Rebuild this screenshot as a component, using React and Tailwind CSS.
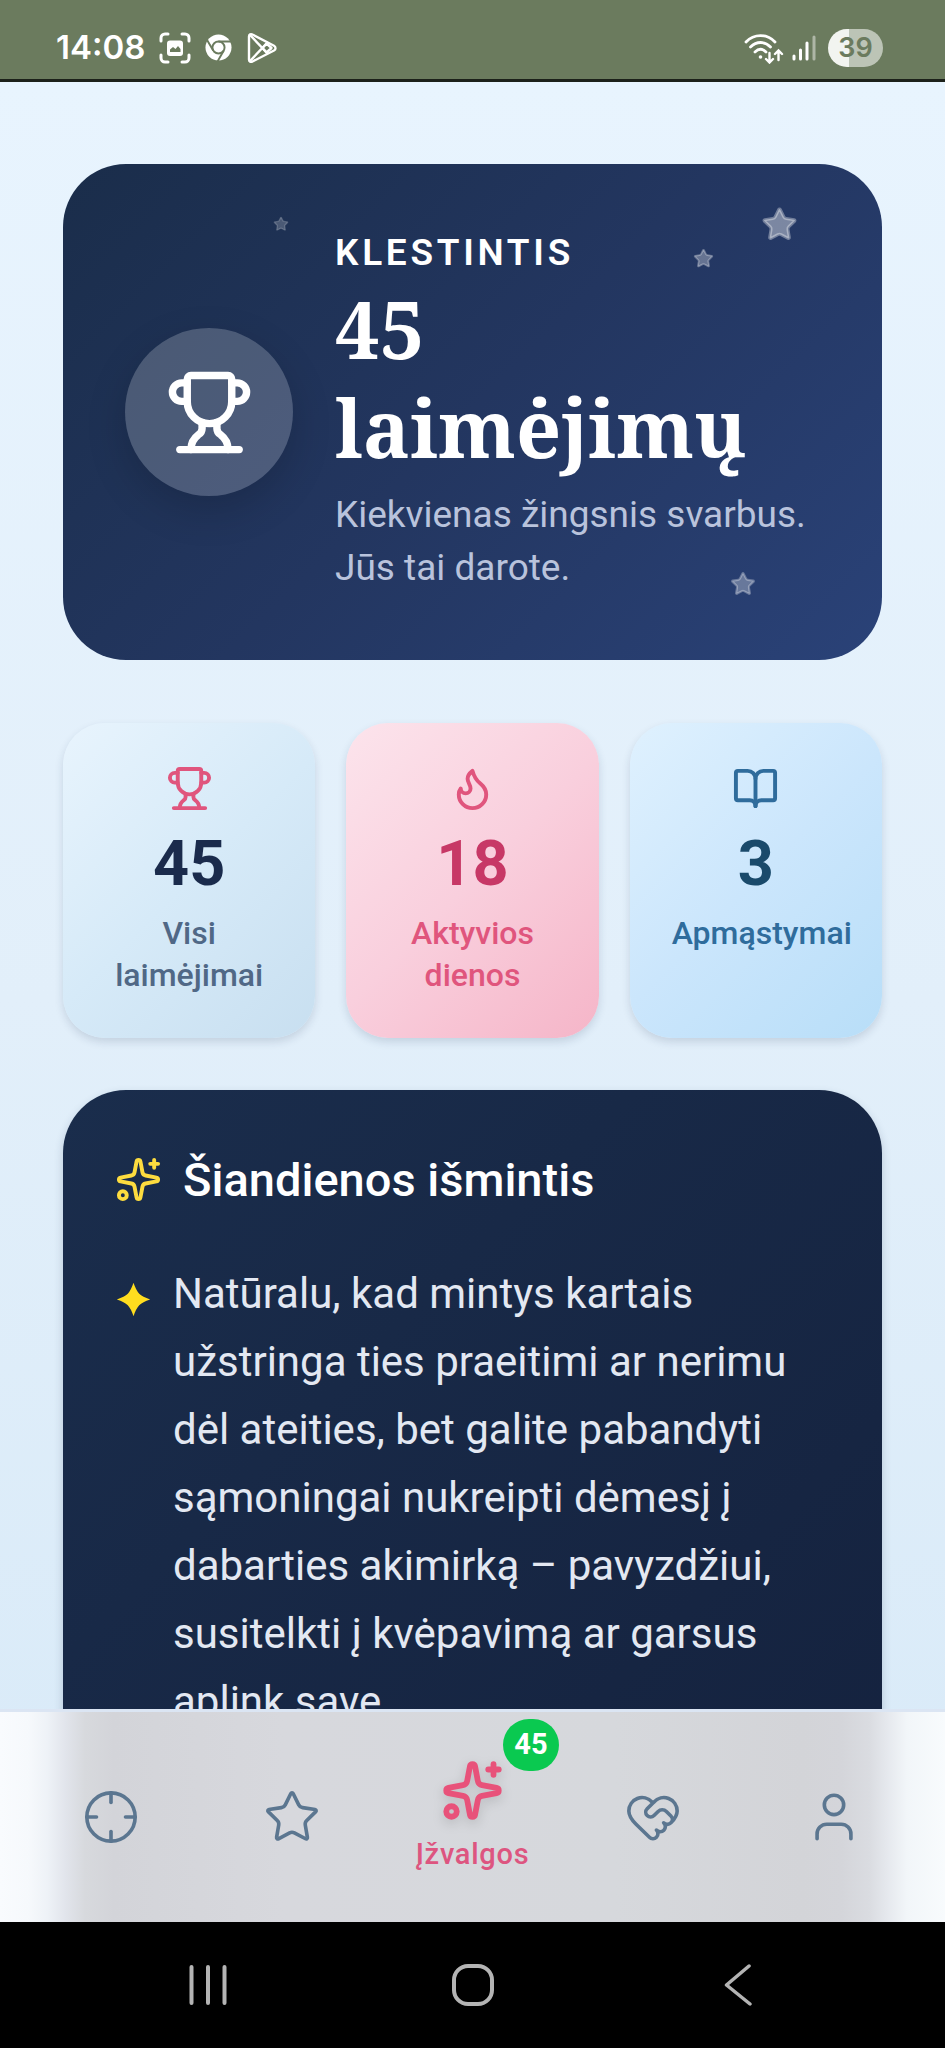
import React, { useState } from "react";
import {
    BookOpen,
    Crosshair,
    Flame,
    HeartHandshake,
    Sparkles,
    Star,
    Trophy,
    User,
} from "lucide-react";
import clsx from "clsx";

const stats = [
    {
        value: 45,
        label: "Visi laimėjimai",
        Icon: Trophy,
        card: "from-[#e8f4fd] via-[#d6eaf8] to-[#c8dff0]",
        icon: "text-[#e0557d]",
        number: "text-[#1a2b4c]",
        text: "text-[#506886]",
    },
    {
        value: 18,
        label: "Aktyvios dienos",
        Icon: Flame,
        card: "from-[#fce4ec] via-[#f9cfdd] to-[#f5b5c8]",
        icon: "text-[#e0557d]",
        number: "text-[#c73866]",
        text: "text-[#e0557d]",
    },
    {
        value: 3,
        label: "Apmąstymai",
        Icon: BookOpen,
        card: "from-[#dff1fe] via-[#cbe6fc] to-[#b8def8]",
        icon: "text-[#2f6c9c]",
        number: "text-[#1a4a6b]",
        text: "text-[#2f6c9c]",
    },
];

const tabs = [
    { id: "focus", label: "Dėmesys", Icon: Crosshair },
    { id: "wins", label: "Laimėjimai", Icon: Star },
    { id: "insights", label: "Įžvalgos", Icon: Sparkles, badge: 45 },
    { id: "support", label: "Parama", Icon: HeartHandshake },
    { id: "profile", label: "Profilis", Icon: User },
];

function StatusBar() {
    return (
        <header className="flex h-[82px] shrink-0 items-center justify-between border-b-3 border-[#1c211a] bg-[#6b7b5e] pt-4 pr-[62px] pl-[56px] text-white">
            <div className="flex items-center gap-[14px]">
                <span className="font-['Inter'] text-[33px] leading-none font-semibold">14:08</span>
                <svg className="size-8" viewBox="0 0 32 32" fill="none" aria-hidden="true">
                    <path
                        d="M2 9V6a4 4 0 0 1 4-4h3M23 2h3a4 4 0 0 1 4 4v3M30 23v3a4 4 0 0 1-4 4h-3M9 30H6a4 4 0 0 1-4-4v-3"
                        stroke="currentColor"
                        strokeWidth="3"
                        strokeLinecap="round"
                    />
                    <rect x="8" y="8.500" width="16" height="15.500" rx="3" fill="currentColor" />
                    <path d="M11 20v-2.500l3-2.500 2.500 2 2.500-3 2.500 3v3z" fill="#6b7b5e" />
                </svg>
                <svg className="size-[27px]" viewBox="0 0 28 28" aria-hidden="true">
                    <circle cx="14" cy="14" r="13.500" fill="currentColor" />
                    <circle cx="14" cy="14" r="6.300" fill="none" stroke="#6b7b5e" strokeWidth="2" />
                    <path d="M14 7.700h13M8.500 17.100 2 6M19.500 17.100 13 28.400" stroke="#6b7b5e" strokeWidth="2" />
                </svg>
                <svg className="size-8" viewBox="0 0 32 32" fill="none" stroke="currentColor" strokeWidth="2.400" strokeLinejoin="round" aria-hidden="true">
                    <path d="M3 4.500v23c0 2 1.800 3 3.500 2L28 18.500c2-1 2-3.500 0-4.700L6.500 2.500C4.800 1.500 3 2.500 3 4.500z" />
                    <path d="M4 3l18 19M4 29l18-19" />
                    <path d="M16.500 16l4-4.500 5 4.500-5 4.500z" />
                </svg>
            </div>
            <div className="flex items-center gap-2">
                <svg className="h-8 w-10" viewBox="0 0 40 32" fill="none" stroke="currentColor" strokeLinecap="round" aria-hidden="true">
                    <path d="M2 10c8-8.500 21-8.500 29 0M6.500 15c6-6 14.500-6 20 0M11 20c3.500-3.500 7.500-3.500 11 0" strokeWidth="2.800" />
                    <circle cx="16.500" cy="25" r="1.800" fill="currentColor" stroke="none" />
                    <path d="M25.500 21v9M22 27l3.500 3.500 3.500-3.500M34.500 28v-9M31 22l3.500-3.500L38 22" strokeWidth="2.400" />
                </svg>
                <svg className="h-7 w-6" viewBox="0 0 24 28" stroke="currentColor" strokeWidth="3" strokeLinecap="round" aria-hidden="true">
                    <path d="M2 22v3M8.500 16v9M15 9v16" />
                    <path d="M22 3v22" opacity=".45" />
                </svg>
                <span className="ml-1 flex h-[38px] w-[55px] items-center justify-center rounded-full bg-linear-to-r from-[#f2f4f0] from-39% to-[#bcc4b6] to-39% font-['Inter'] text-[27px] leading-none font-semibold text-[#6b7b5e]">
                    39
                </span>
            </div>
        </header>
    );
}

function HeroCard() {
    return (
        <section className="relative flex items-center gap-[42px] overflow-hidden rounded-[63px] bg-linear-135 from-[#1a2d4a] via-[#233660] to-[#2a4278] p-[62px]">
            <Star className="absolute top-[42px] right-[84px] size-[37px] fill-white/40 text-white/35" />
            <Star className="absolute top-[84px] right-[168px] size-[21px] fill-white/30 text-white/30" />
            <Star className="absolute right-[126px] bottom-[63px] size-[26px] fill-white/30 text-white/30" />
            <Star className="absolute top-[52px] left-[210px] size-4 fill-white/20 text-white/20" />

            <div className="relative flex size-[168px] shrink-0 items-center justify-center rounded-full bg-white/20 shadow-[0_14px_40px_rgba(0,0,0,0.16)]">
                <Trophy className="size-[89px] text-white" />
            </div>
            <div className="relative min-w-0 flex-1 pb-1">
                <p className="text-[37px] leading-[53px] font-semibold tracking-widest text-white uppercase">
                    Klestintis
                </p>
                <h1 className="font-['Noto_Serif','DejaVu_Serif_Condensed','DejaVu_Serif',serif] text-[79px] leading-[99px] font-bold text-white">
                    45 laimėjimų
                </h1>
                <p className="mt-[11px] text-[37px] leading-[53px] text-[#b9c3dc]">
                    Kiekvienas žingsnis svarbus. Jūs tai darote.
                </p>
            </div>
        </section>
    );
}

function StatCard({ stat }) {
    const { Icon } = stat;

    return (
        <li
            className={clsx(
                "flex min-w-0 flex-col items-center rounded-[42px] bg-linear-135 p-[42px] text-center shadow-[0_4px_8px_rgba(30,50,80,0.15)]",
                stat.card
            )}
        >
            <Icon className={clsx("size-[47px] shrink-0", stat.icon)} />
            <span className={clsx("mt-[10px] text-[63px] leading-[84px] font-bold", stat.number)}>
                {stat.value}
            </span>
            <span className={clsx("mt-[6px] w-full text-[32px] leading-[42px] font-medium", stat.text)}>
                {stat.label}
            </span>
        </li>
    );
}

function WisdomCard() {
    return (
        <section className="rounded-[63px] bg-linear-135 from-[#1a2d4c] to-[#14213d] px-[52px] pt-[58px] pb-[260px] shadow-[0_4px_10px_rgba(30,50,80,0.2)]">
            <div className="flex items-center gap-[21px]">
                <Sparkles className="size-[47px] text-[#fddc3f]" />
                <h2 className="text-[47px] leading-[63px] font-medium text-white">Šiandienos išmintis</h2>
            </div>
            <div className="mt-[49px] flex items-start gap-[21px]">
                <svg className="mt-[21px] size-[37px] shrink-0 text-[#ffdd1f]" viewBox="0 0 24 24" aria-hidden="true">
                    <path
                        d="M12 1.200Q13.700 6.200 15.700 8.300Q17.800 10.300 22.800 12Q17.800 13.700 15.700 15.700Q13.700 17.800 12 22.800Q10.300 17.800 8.300 15.700Q6.200 13.700 1.200 12Q6.200 10.300 8.300 8.300Q10.300 6.200 12 1.200Z"
                        fill="currentColor"
                    />
                </svg>
                <p className="text-[42px] leading-[68px] text-[#e3e8f2]">
                    Natūralu, kad mintys kartais užstringa ties praeitimi ar nerimu dėl ateities, bet galite
                    pabandyti sąmoningai nukreipti dėmesį į dabarties akimirką – pavyzdžiui, susitelkti į
                    kvėpavimą ar garsus aplink save.
                </p>
            </div>
        </section>
    );
}

function TabBar({ active, onChange }) {
    return (
        <nav className="absolute inset-x-0 bottom-0 grid h-[213px] grid-cols-5 border-t-3 border-[#dbe5f3] bg-[linear-gradient(to_right,#f9fbfe_0%,#f6f9fc_3%,#eef2f7_5%,#e1e4eb_7%,#d7d9dd_9%,#d3d4d9_12%,#d7d8dd_30%,#d6d8dc_65%,#d3d4d8_85%,#d4d5da_89%,#dadce1_92%,#e6e9ee_94%,#f2f6f9_96%,#f8fbfd_100%)] px-[21px]">
            {tabs.map(({ id, label, Icon, badge }) => {
                const isActive = id === active;

                return (
                    <button
                        key={id}
                        type="button"
                        aria-label={label}
                        onClick={() => onChange(id)}
                        className="flex flex-col items-center justify-center gap-[10px]"
                    >
                        <span className="relative">
                            <Icon
                                className={clsx(
                                    isActive
                                        ? "size-[63px] text-[#e8527a] drop-shadow-[0_4px_6px_rgba(0,0,0,0.15)]"
                                        : "size-[58px] text-[#5b7690]"
                                )}
                                strokeWidth={isActive ? 2.2 : 1.5}
                            />
                            {badge && (
                                <span className="absolute -top-10 -right-[55px] flex h-[52px] w-14 items-center justify-center rounded-full bg-[#0ac950] text-[29px] leading-none font-bold text-white">
                                    {badge}
                                </span>
                            )}
                        </span>
                        {isActive && (
                            <span className="text-[29px] leading-[44px] font-medium tracking-wide text-[#dd5580]">
                                {label}
                            </span>
                        )}
                    </button>
                );
            })}
        </nav>
    );
}

function SystemBar() {
    return (
        <footer className="grid h-[126px] shrink-0 grid-cols-3 items-center bg-black px-[75px] text-[#b4b4b4]">
            <button type="button" aria-label="Naujausios" className="flex justify-center">
                <svg className="size-[42px]" viewBox="0 0 42 42" stroke="currentColor" strokeWidth="4" strokeLinecap="round">
                    <path d="M4.500 3v36M21 3v36M37.500 3v36" />
                </svg>
            </button>
            <button type="button" aria-label="Pradžia" className="flex justify-center">
                <svg className="size-[42px]" viewBox="0 0 42 42" fill="none" stroke="currentColor" strokeWidth="4">
                    <rect x="2" y="2" width="38" height="38" rx="14" />
                </svg>
            </button>
            <button type="button" aria-label="Atgal" className="flex justify-center">
                <svg className="size-[42px]" viewBox="0 0 42 42" fill="none" stroke="currentColor" strokeWidth="3.500" strokeLinecap="round" strokeLinejoin="round">
                    <path d="M32 2 9.500 21 33 40" />
                </svg>
            </button>
        </footer>
    );
}

function App() {
    const [active, setActive] = useState("insights");

    return (
        <div className="flex h-screen flex-col overflow-hidden font-['Roboto',sans-serif]">
            <StatusBar />
            <div className="relative min-h-0 flex-1 overflow-hidden bg-linear-to-b from-[#e8f4fe] via-[#e2effa] to-[#d8eaf8]">
                <main className="px-[63px] pt-[82px]">
                    <HeroCard />
                    <ul className="mt-[63px] grid grid-cols-3 gap-[31px]">
                        {stats.map((stat) => (
                            <StatCard key={stat.label} stat={stat} />
                        ))}
                    </ul>
                    <div className="mt-[52px]">
                        <WisdomCard />
                    </div>
                </main>
                <TabBar active={active} onChange={setActive} />
            </div>
            <SystemBar />
        </div>
    );
}

export default App;
